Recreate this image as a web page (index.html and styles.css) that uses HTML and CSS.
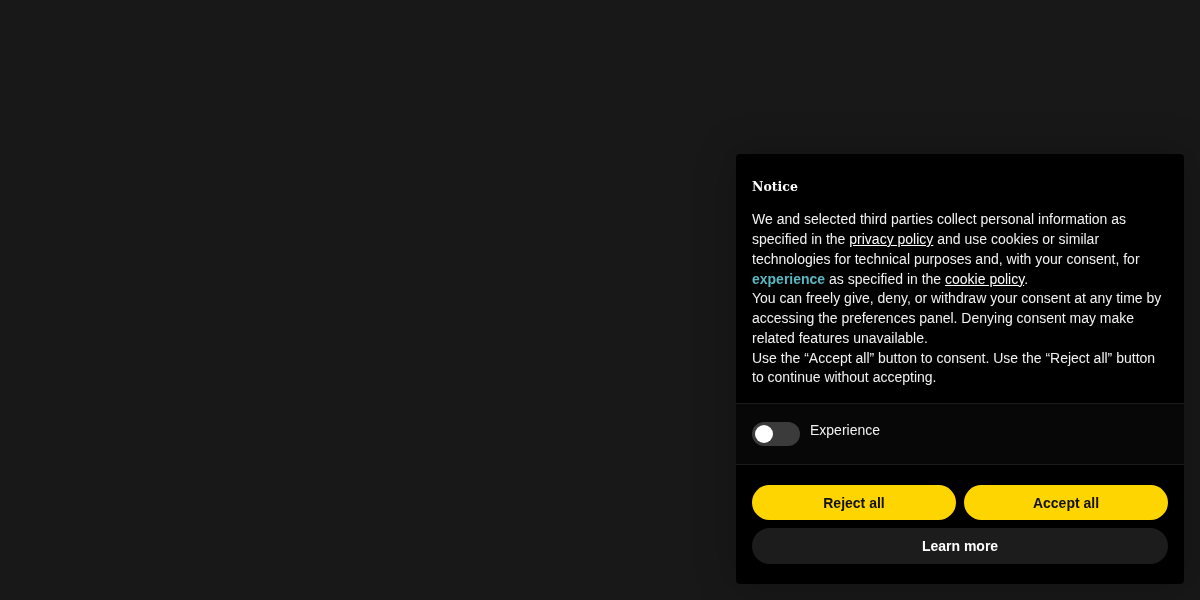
FILE: index.html
```html
<!DOCTYPE html>
<html lang="en">
<head>
  <meta charset="UTF-8" />
  <meta name="viewport" content="width=device-width, initial-scale=1.0">
  <title>Notice</title>
  <link rel="stylesheet" href="styles.css">
</head>
<body>
  <div class="banner">
    <div class="banner-body">
      <h2>Notice</h2>
      <p>
        We and selected third parties collect personal information as specified in the <a href="#">privacy policy</a> and use cookies or similar technologies for technical purposes and, with your consent, for <strong class="purpose">experience</strong> as specified in the <a href="#">cookie policy</a>.<br>
        You can freely give, deny, or withdraw your consent at any time by accessing the preferences panel. Denying consent may make related features unavailable.<br>
        Use the &ldquo;Accept all&rdquo; button to consent. Use the &ldquo;Reject all&rdquo; button to continue without accepting.
      </p>
    </div>

    <div class="purposes">
      <label class="purpose-item">
        <span class="switch"><span class="knob"></span></span>
        <span>Experience</span>
      </label>
    </div>

    <div class="actions">
      <div class="row">
        <button type="button" class="btn primary">Reject all</button>
        <button type="button" class="btn primary">Accept all</button>
      </div>
      <button type="button" class="btn secondary">Learn more</button>
    </div>
  </div>
</body>
</html>
```

FILE: styles.css
```css
:root {
  --page-bg: #181818;
  --panel-bg: #000000;
  --divider: #1c1c1c;
  --yellow: #ffd500;
  --teal: #59b7c1;
}

* {
  margin: 0;
  padding: 0;
  box-sizing: border-box;
  font-family: 'Liberation Sans', Arial, sans-serif;
}

html,
body {
  height: 100%;
}

body {
  background-color: var(--page-bg);
  color: #fff;
  overflow: hidden;
}

.banner {
  position: fixed;
  right: 16px;
  bottom: 16px;
  width: 448px;
  background-color: var(--panel-bg);
  border-radius: 4px;
  box-shadow: 0 0 40px rgba(0, 0, 0, 0.25);
}

.banner-body {
  padding: 25px 16px 15px;
  border-bottom: 1px solid var(--divider);
}

h2 {
  font-family: 'DejaVu Serif', 'Liberation Serif', serif;
  font-size: 12.5px;
  line-height: 16px;
  font-weight: 700;
  margin-bottom: 15px;
}

p {
  font-size: 14px;
  line-height: 19.75px;
  color: #f2f2f2;
}

p a {
  color: #fff;
  text-decoration: underline;
}

.purpose {
  color: var(--teal);
  font-weight: 700;
}

.purposes {
  padding: 18px 16px;
  background-color: #070707;
  border-bottom: 1px solid var(--divider);
}

.purpose-item {
  display: flex;
  align-items: flex-start;
  gap: 10px;
  font-size: 14px;
  line-height: 16px;
  color: #f2f2f2;
}

.switch {
  width: 48px;
  height: 24px;
  border-radius: 12px;
  background-color: #3b3b3b;
  padding: 3px;
  display: flex;
  flex-shrink: 0;
}

.knob {
  width: 18px;
  height: 18px;
  border-radius: 50%;
  background-color: #fff;
}

.actions {
  padding: 20px 16px;
  display: flex;
  flex-direction: column;
  gap: 8px;
}

.row {
  display: flex;
  gap: 8px;
}

.row .btn {
  flex: 1;
}

.btn {
  height: 36px;
  border: none;
  border-radius: 18px;
  font-size: 14px;
  font-weight: 700;
  cursor: pointer;
}

.primary {
  height: 35px;
  background-color: var(--yellow);
  color: #111;
}

.secondary {
  background-color: #1c1c1c;
  color: #fff;
}
```
